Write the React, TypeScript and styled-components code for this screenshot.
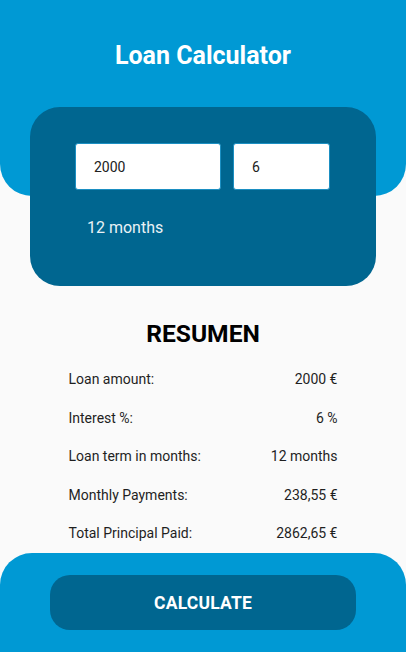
import React from "react";
import styled, { createGlobalStyle } from "styled-components";

const Global = createGlobalStyle`
  html, body { margin: 0; padding: 0; background: #fafafa; }
  body { font-family: Roboto, "Noto Sans", sans-serif; }
  * { box-sizing: border-box; }
`;

const Page = styled.div`
  display: flex;
  flex-direction: column;
  width: 406px;
  height: 652px;
  overflow: hidden;
  background: #fafafa;
`;

const Header = styled.header`
  background: #0099d4;
  height: 196px;
  border-radius: 0 0 32px 32px;
  display: flex;
  justify-content: center;
  padding-top: 40px;
`;

const Title = styled.h1`
  margin: 0;
  color: #ffffff;
  font-size: 25px;
  font-weight: 700;
  line-height: 32px;
  height: 32px;
`;

const Card = styled.section`
  margin: -89px 30px 0;
  height: 179px;
  background: #006690;
  border-radius: 30px;
  padding: 36px 45px 0;
  display: flex;
  flex-direction: column;
`;

const InputRow = styled.div`
  display: flex;
  gap: 12px;
`;

const Field = styled.input<{ $w: number }>`
  width: ${(p) => p.$w}px;
  height: 47px;
  border: 1px solid #1b8fc2;
  border-radius: 3px;
  background: #ffffff;
  padding: 0 18px;
  font-family: Roboto, sans-serif;
  font-size: 14px;
  color: #212121;
  outline: none;
`;

const Term = styled.div`
  margin-top: 27px;
  padding-left: 12px;
  color: #eaf2f6;
  font-size: 16px;
  line-height: 22px;
`;

const Summary = styled.section`
  display: flex;
  flex-direction: column;
  align-items: center;
  padding-top: 33px;
`;

const SummaryTitle = styled.h2`
  margin: 0;
  font-size: 24.6px;
  font-weight: 700;
  color: #000000;
  line-height: 30px;
`;

const Rows = styled.div`
  width: 269px;
  margin-top: 20px;
  display: flex;
  flex-direction: column;
  gap: 18.5px;
`;

const Row = styled.div`
  display: flex;
  justify-content: space-between;
  font-size: 14px;
  line-height: 20px;
  color: #1f1f1f;
`;

const Footer = styled.footer`
  margin-top: auto;
  height: 99px;
  background: #0099d4;
  border-radius: 32px 32px 0 0;
  padding: 22px 50px 0;
`;

const Button = styled.button`
  width: 100%;
  height: 55px;
  border: none;
  border-radius: 20px;
  background: #006690;
  color: #ffffff;
  font-family: Roboto, sans-serif;
  font-size: 17.5px;
  font-weight: 700;
  letter-spacing: 0.2px;
  cursor: pointer;
`;

const rows: [string, string][] = [
  ["Loan amount:", "2000 €"],
  ["Interest %:", "6 %"],
  ["Loan term in months:", "12 months"],
  ["Monthly Payments:", "238,55 €"],
  ["Total Principal Paid:", "2862,65 €"],
];

export default function App() {
  return (
    <>
      <Global />
      <Page>
        <Header>
          <Title>Loan Calculator</Title>
        </Header>
        <Card>
          <InputRow>
            <Field $w={146} defaultValue="2000" />
            <Field $w={97} defaultValue="6" />
          </InputRow>
          <Term>12 months</Term>
        </Card>
        <Summary>
          <SummaryTitle>RESUMEN</SummaryTitle>
          <Rows>
            {rows.map(([l, v]) => (
              <Row key={l}>
                <span>{l}</span>
                <span>{v}</span>
              </Row>
            ))}
          </Rows>
        </Summary>
        <Footer>
          <Button>CALCULATE</Button>
        </Footer>
      </Page>
    </>
  );
}
